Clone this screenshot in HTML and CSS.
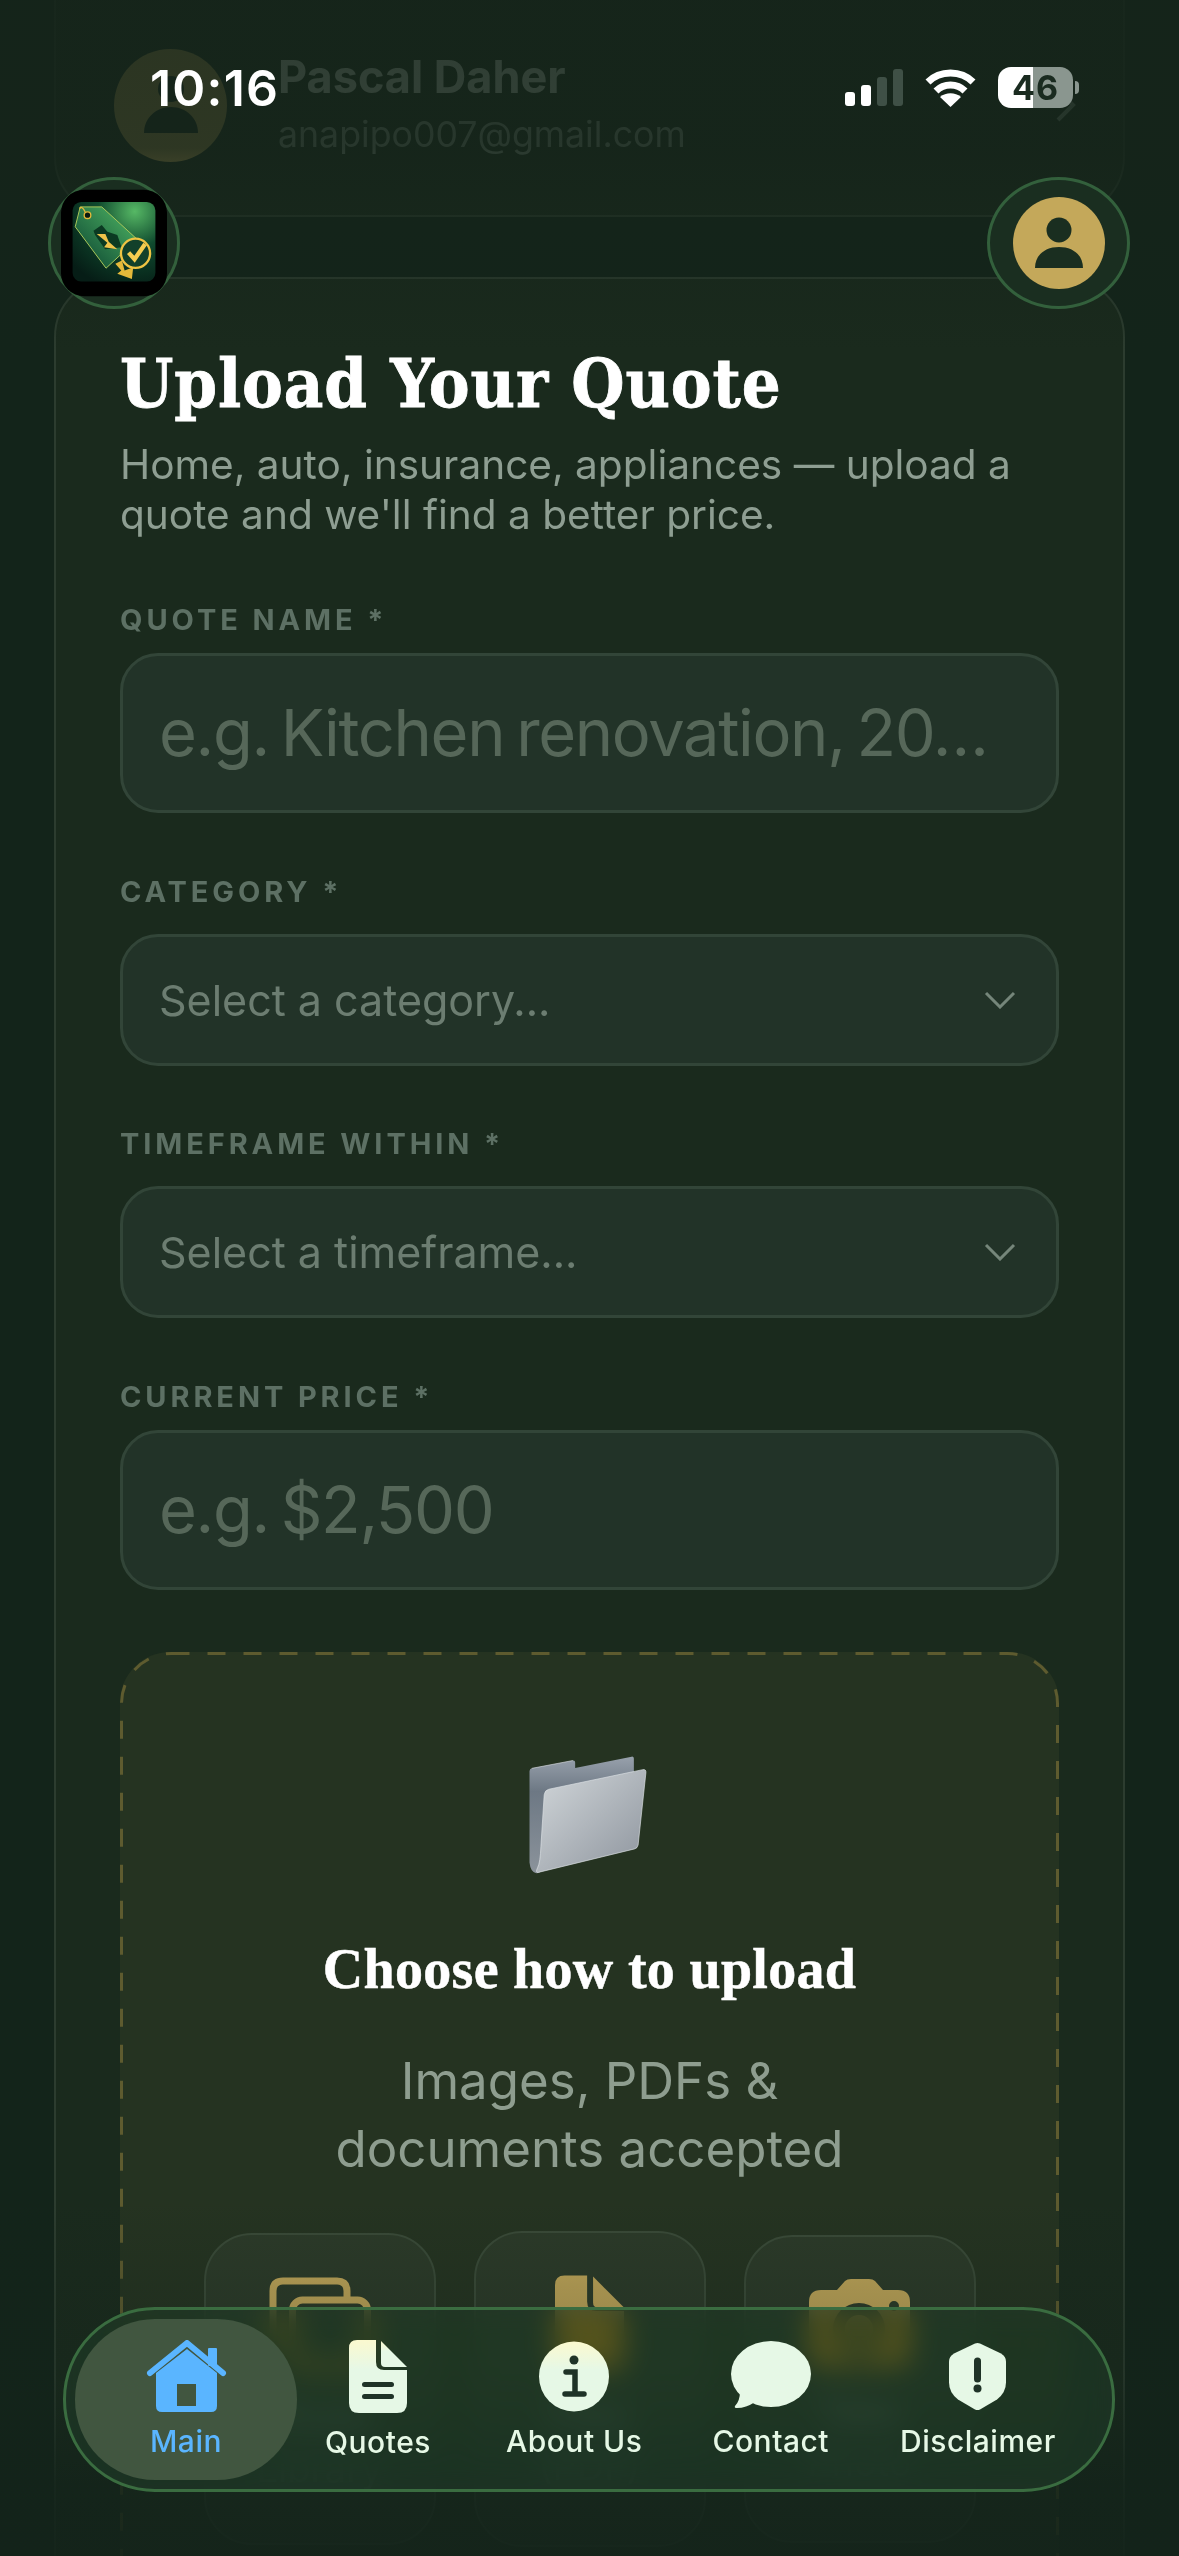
FILE: index.html
```html
<!DOCTYPE html>
<html>
<head>
  <title>Upload Your Quote</title>
  <meta charset="utf-8">
  <meta name="viewport" content="width=device-width, initial-scale=1.0">
  <link rel="stylesheet" href="styles.css">
</head>
<body>

  <div class="profile-card">
    <div class="profile-avatar">
      <svg width="62" height="62" viewBox="0 0 62 62"><circle cx="31" cy="14" r="13" fill="#14241a"/><path d="M4 58C4 43 16 32 31 32s27 11 27 26z" fill="#14241a"/></svg>
    </div>
    <div class="profile-text">
      <div class="profile-name">Pascal Daher</div>
      <div class="profile-email">anapipo007@gmail.com</div>
    </div>
    <svg class="profile-chevron" width="20" height="34" viewBox="0 0 20 34"><path d="M2 2l15 15L2 32" fill="none" stroke="#8fa092" stroke-width="4"/></svg>
  </div>

  <div class="main-card">
    <h1 class="page-title">Upload Your Quote</h1>
    <p class="page-sub">Home, auto, insurance, appliances — upload a quote and we'll find a better price.</p>

    <div class="label">QUOTE NAME *</div>
    <div class="text-box">e.g. Kitchen renovation, 20…</div>

    <div class="label label-select">CATEGORY *</div>
    <div class="select-box">
      <span>Select a category...</span>
      <svg width="32" height="18" viewBox="0 0 32 18"><path d="M2 2l14 14L30 2" fill="none" stroke="#75867a" stroke-width="3"/></svg>
    </div>

    <div class="label label-select">TIMEFRAME WITHIN *</div>
    <div class="select-box">
      <span>Select a timeframe...</span>
      <svg width="32" height="18" viewBox="0 0 32 18"><path d="M2 2l14 14L30 2" fill="none" stroke="#75867a" stroke-width="3"/></svg>
    </div>

    <div class="label">CURRENT PRICE *</div>
    <div class="text-box">e.g. $2,500</div>

    <div class="drop-zone">
      <svg class="drop-dash" width="100%" height="100%"><rect x="1.5" y="1.5" width="936" height="1000" rx="50" fill="none" stroke="#5e5b2f" stroke-width="3" stroke-dasharray="18 18"/></svg>

      <svg class="folder" width="122" height="120" viewBox="236 160 365 368">
        <defs>
          <linearGradient id="folderBack" x1="0" y1="0" x2="0" y2="1"><stop offset="0" stop-color="#98a1ac"/><stop offset="0.3" stop-color="#6d7884"/><stop offset="1" stop-color="#8b939b"/></linearGradient>
          <linearGradient id="folderFront" x1="0" y1="0" x2="1" y2="1"><stop offset="0" stop-color="#d2d7da"/><stop offset="1" stop-color="#8d949d"/></linearGradient>
        </defs>
        <path d="M233 210Q233 203 240 201L366 177Q373 176 373 183V200L546 165Q553 164 553 171V240L280 500Q270 525 252 522Q236 518 233 490Z" fill="url(#folderBack)"/>
        <path d="M240 201L366 177" fill="none" stroke="#d5d9dd" stroke-width="2"/>
        <path d="M292 265L580 205Q591 203 590 214L566 436Q564 446 555 448L260 520Q250 522 258 505Q266 490 268 440L278 282Q280 268 292 265Z" fill="url(#folderFront)" stroke="#dfe3e6" stroke-width="2"/>
      </svg>

      <h2 class="drop-title">Choose how to upload</h2>
      <p class="drop-sub">Images, PDFs &amp;<br>documents accepted</p>

      <div class="upload-row">
        <div class="upload-btn upload-btn-a">
          <svg class="upload-icon" width="102" height="96" viewBox="0 0 102 96" fill="none" stroke="#c4a85a" stroke-width="7"><path d="M4 70V14Q4 4 14 4H68Q78 4 78 14V23"/><rect x="23.500" y="23" width="75" height="66" rx="10" fill="#2b3928"/></svg>
          <div class="upload-text">Photo<br>Library</div>
        </div>
        <div class="upload-btn upload-btn-b">
          <svg class="upload-icon upload-icon-doc" width="69" height="96" viewBox="0 0 58 80" fill="#c4a85a"><path d="M8 0H27V22Q27 30 35 30H58V70Q58 80 48 80H10Q0 80 0 70V8Q0 0 8 0Z"/><path d="M32 1L58 27H36Q32 27 32 23Z"/></svg>
          <div class="upload-text">Files<br>(PDF)</div>
        </div>
        <div class="upload-btn upload-btn-c">
          <svg class="upload-icon" width="101" height="88" viewBox="0 0 101 88"><path fill-rule="evenodd" fill="#c4a85a" d="M12 11H28L36 2Q38 0 42 0H60Q64 0 66 2L74 11H89Q101 11 101 23V76Q101 88 89 88H12Q0 88 0 76V23Q0 11 12 11ZM50 24A26 26 0 1 0 50 76A26 26 0 1 0 50 24ZM50 36A14 14 0 1 1 50 64A14 14 0 1 1 50 36ZM85 22A5 5 0 1 0 85 32A5 5 0 1 0 85 22Z"/></svg>
          <div class="upload-text">Take<br>Photo</div>
        </div>
      </div>
    </div>
  </div>

  <div class="fade-top"></div>
  <div class="fade-bottom"></div>

  <div class="status-bar">
    <div class="status-time">10:16</div>
    <div class="status-icons">
      <div class="signal">
        <span class="bar bar-1"></span>
        <span class="bar bar-2"></span>
        <span class="bar bar-3"></span>
        <span class="bar bar-4"></span>
      </div>
      <svg width="51" height="38" viewBox="0 0 51 38">
        <path d="M3 13C15 1 36 1 48 13" fill="none" stroke="#fff" stroke-width="7"/>
        <path d="M11 22C19 14 32 14 40 22" fill="none" stroke="#fff" stroke-width="7"/>
        <path d="M25.500 38L15 28C21 23 30 23 36 28Z" fill="#fff"/>
      </svg>
      <div class="battery">46</div>
      <div class="battery-tip"></div>
    </div>
  </div>

  <div class="logo-ring">
    <svg width="106" height="108" viewBox="92 88 320 322">
      <defs>
        <radialGradient id="tile" cx="0.75" cy="0.12" r="1"><stop offset="0" stop-color="#56b865"/><stop offset="0.45" stop-color="#0f4a2e"/><stop offset="1" stop-color="#061d16"/></radialGradient>
        <linearGradient id="tag" x1="1" y1="0" x2="0" y2="1"><stop offset="0" stop-color="#52bb66"/><stop offset="0.8" stop-color="#17583a"/><stop offset="1" stop-color="#0f4029"/></linearGradient>
      </defs>
      <rect x="92" y="88" width="320" height="322" rx="70" fill="#000"/>
      <rect x="127" y="125" width="250" height="240" rx="26" fill="url(#tile)"/>
      <path d="M150 140H215L322 238L228 325L135 200Z" fill="url(#tag)" stroke="#a9c85a" stroke-width="3"/>
      <circle cx="172" cy="165" r="10" fill="#0a1a10" stroke="#e5b93a" stroke-width="4"/>
      <path d="M148 145Q155 135 165 155" fill="none" stroke="#e5b93a" stroke-width="4"/>
      <path d="M190 212L215 195L232 215L262 225L275 262L225 268L195 225Z" fill="#0b3a22"/>
      <path d="M200 222L226 222L236 245L262 268L222 262L232 248Z" fill="#eec34a"/>
      <path d="M256 312L276 302L284 332L310 322L306 358L262 342L274 332Z" fill="#e5b93a"/>
      <circle cx="317" cy="280" r="44" fill="#12402a" stroke="#efc343" stroke-width="7"/>
      <path d="M296 278L314 298L346 252" fill="none" stroke="#f5cc50" stroke-width="13"/>
    </svg>
  </div>

  <div class="user-ring">
    <div class="user-dot">
      <svg width="48" height="52" viewBox="0 0 48 52"><circle cx="24" cy="13" r="12.500" fill="#1a2e20"/><path d="M0 51C0 38 10 30 24 30s24 8 24 21z" fill="#1a2e20"/></svg>
    </div>
  </div>

  <div class="bottom-nav">
    <div class="nav-item nav-active">
      <svg width="81" height="72" viewBox="0 0 81 72">
        <path d="M4 33L41 3L77 33" fill="none" stroke="#5ab5ff" stroke-width="6" stroke-linecap="round" stroke-linejoin="round"/>
        <rect x="62" y="8" width="9" height="18" rx="1" fill="#5ab5ff"/>
        <path fill-rule="evenodd" fill="#5ab5ff" d="M10 33L41 9L71 33V66Q71 72 65 72H16Q10 72 10 66ZM31 44V66H50V44Z"/>
      </svg>
      <span>Main</span>
    </div>
    <div class="nav-item">
      <svg width="58" height="73" viewBox="0 0 58 73">
        <defs><linearGradient id="glowFill" x1="0" y1="0" x2="0" y2="1"><stop offset="0" stop-color="#fbf9cf"/><stop offset="0.4" stop-color="#e6f8e6"/></linearGradient></defs>
        <path d="M8 0H27V22Q27 30 35 30H58V63Q58 73 48 73H10Q0 73 0 63V8Q0 0 8 0Z" fill="url(#glowFill)"/>
        <path d="M32 1L58 27H36Q32 27 32 23Z" fill="url(#glowFill)"/>
        <rect x="13" y="42" width="32" height="5" rx="2.500" fill="#1f3327"/>
        <rect x="13" y="54" width="32" height="5" rx="2.500" fill="#1f3327"/>
      </svg>
      <span>Quotes</span>
    </div>
    <div class="nav-item nav-about">
      <svg width="70" height="71" viewBox="0 0 70 71">
        <circle cx="35" cy="35.500" r="35" fill="url(#glowFill)"/>
        <circle cx="35" cy="19" r="4.500" fill="#1f3327"/>
        <path d="M27 31H36V52M26 53H45" fill="none" stroke="#1f3327" stroke-width="5.500" stroke-linecap="round"/>
      </svg>
      <span>About Us</span>
    </div>
    <div class="nav-item">
      <svg width="80" height="71" viewBox="0 0 80 71">
        <ellipse cx="40" cy="33" rx="40" ry="33" fill="#e6f8e6"/>
        <path d="M9 50Q9 60 4 65Q3 67 6 67Q15 67 24 61Z" fill="#e6f8e6"/>
      </svg>
      <span>Contact</span>
    </div>
    <div class="nav-item">
      <svg width="57" height="71" viewBox="0 0 57 68">
        <path d="M26 1Q28.500 0 31 1L52 11Q57 14 57 19V40Q57 50 48 57L31 67Q28.500 68 26 67L9 57Q0 50 0 40V19Q0 14 5 11Z" fill="#e6f8e6"/>
        <rect x="25" y="15" width="7" height="25" rx="3.500" fill="#1f3327"/>
        <circle cx="28.500" cy="46" r="4" fill="#1f3327"/>
      </svg>
      <span>Disclaimer</span>
    </div>
  </div>

</body>
</html>
```

FILE: styles.css
```css
html, body {
  margin: 0;
  height: 2556px;
  overflow: hidden;
}

body {
  position: relative;
  background-color: #13241a;
  font-family: 'Inter', 'Liberation Sans', sans-serif;
}

/* cards */

.profile-card {
  display: flex;
  align-items: flex-start;
  box-sizing: border-box;
  height: 277px;
  margin: -60px 54px 60px;
  padding: 107px 0 0 58px;
  background-color: #1a2a1d;
  border: 2px solid #2a3a2d;
  border-radius: 60px;
}

.profile-avatar {
  display: flex;
  align-items: center;
  justify-content: center;
  flex: none;
  width: 113px;
  height: 113px;
  border-radius: 50%;
  background-color: #c4a85a;
}

.profile-text {
  margin-left: 51px;
}

.profile-name {
  font-size: 45px;
  font-weight: 700;
  line-height: 56px;
  color: #e6f0e6;
}

.profile-email {
  margin-top: 2px;
  font-size: 35.7px;
  line-height: 54px;
  color: #9aa99d;
}

.profile-chevron {
  margin: 39px 47px 0 auto;
}

.main-card {
  box-sizing: border-box;
  height: 2400px;
  margin: 0 54px;
  padding: 0 64px;
  background-color: #1a2a1d;
  border: 2px solid #2c3c2f;
  border-radius: 60px;
}

.page-title {
  margin: 60px 0 0;
  font-family: 'DejaVu Serif Condensed', 'DejaVu Serif', serif;
  font-size: 68px;
  font-stretch: condensed;
  font-weight: 700;
  line-height: 88px;
  letter-spacing: 0.9px;
  color: #fff;
  -webkit-text-stroke: 0.8px #fff;
}

.page-sub {
  margin: 13px 0 0;
  font-size: 40.6px;
  line-height: 50px;
  color: #8e9e92;
}

/* form */

.label {
  margin-top: 60.6px;
  margin-bottom: 15px;
  font-size: 29px;
  font-weight: 700;
  line-height: 36px;
  letter-spacing: 3.9px;
  color: #5d7064;
}

.page-sub + .label {
  margin-top: 62px;
}

.label-select {
  margin-bottom: 24px;
}

.text-box {
  box-sizing: border-box;
  height: 160px;
  padding: 0 36px;
  background-color: #223328;
  border: 3px solid #324538;
  border-radius: 38px;
  font-size: 65px;
  line-height: 154px;
  letter-spacing: -1.35px;
  word-spacing: -5px;
  white-space: nowrap;
  color: #566759;
}

.select-box {
  display: flex;
  align-items: center;
  justify-content: space-between;
  box-sizing: border-box;
  height: 132px;
  padding: 0 40px 0 36px;
  background-color: #223328;
  border: 3px solid #324538;
  border-radius: 38px;
  font-size: 43px;
  color: #6c7d71;
}

/* upload box */

.drop-zone {
  position: relative;
  box-sizing: border-box;
  height: 1004px;
  margin-top: 62px;
  padding-top: 103px;
  background-color: #253321;
  border-radius: 50px;
  text-align: center;
}

.drop-dash {
  position: absolute;
  left: 0;
  top: 0;
}

.folder {
  display: block;
  margin: 0 auto;
}

.drop-title {
  margin: 62px 0 0;
  font-family: 'Liberation Serif', serif;
  font-size: 56px;
  font-weight: 700;
  line-height: 64px;
  letter-spacing: 0.3px;
  color: #fff;
  -webkit-text-stroke: 0.5px #fff;
}

.drop-sub {
  margin: 46px 0 0;
  font-size: 51px;
  line-height: 68px;
  color: #8e9d8f;
}

.upload-row {
  display: flex;
  align-items: center;
  justify-content: center;
  gap: 38px;
  height: 316px;
  margin-top: 48px;
}

.upload-btn {
  box-sizing: border-box;
  width: 232px;
  padding-top: 42px;
  background-color: #2c3a29;
  border: 2px solid #3a4a38;
  border-radius: 48px;
}

.upload-btn-a {
  height: 312px;
}

.upload-btn-b {
  height: 316px;
}

.upload-btn-c {
  height: 308px;
}

.upload-icon {
  display: block;
  margin: 0 auto;
}

.upload-text {
  margin-top: 20px;
  font-size: 38px;
  line-height: 50px;
  color: #9aa99d;
}

/* the page fades out under the status bar and under the nav */

.fade-top {
  position: absolute;
  left: 0;
  top: 0;
  width: 100%;
  height: 400px;
  background: linear-gradient(to bottom, rgba(21, 36, 26, 0.88) 0, rgba(21, 36, 26, 0.86) 37%, rgba(21, 36, 26, 0.4) 62%, rgba(21, 36, 26, 0) 88%);
}

.fade-bottom {
  position: absolute;
  left: 0;
  bottom: 0;
  width: 100%;
  height: 356px;
  background: linear-gradient(to bottom, rgba(19, 35, 26, 0) 0, rgba(19, 35, 26, 0.18) 25%, rgba(19, 35, 26, 0.3) 50%, rgba(19, 35, 26, 0.85) 80%, rgba(19, 35, 26, 0.92) 100%);
}

/* status bar */

.status-bar {
  position: absolute;
  left: 0;
  top: 0;
  display: flex;
  align-items: flex-start;
  justify-content: space-between;
  box-sizing: border-box;
  width: 100%;
  padding: 58px 100px 0 150px;
}

.status-time {
  font-size: 50px;
  font-weight: 600;
  line-height: 60px;
  letter-spacing: 1.2px;
  color: #fff;
}

.status-icons {
  display: flex;
  align-items: center;
  gap: 22px;
  margin-top: 9px;
}

.signal {
  display: flex;
  align-items: flex-end;
  gap: 6px;
  height: 37px;
}

.bar {
  width: 10px;
  border-radius: 3px;
  background-color: #fff;
}

.bar-1 {
  height: 14px;
}

.bar-2 {
  height: 21px;
}

.bar-3 {
  height: 29px;
  background-color: #3f5046;
}

.bar-4 {
  height: 37px;
  background-color: #3f5046;
}

.battery {
  width: 75px;
  height: 41px;
  border-radius: 13px;
  background: linear-gradient(to right, #fff 47%, #8a968f 47%);
  font-size: 34px;
  font-weight: 700;
  line-height: 41px;
  letter-spacing: 1px;
  text-align: center;
  color: #1a2b20;
}

.battery-tip {
  width: 4px;
  height: 13px;
  margin-left: -20px;
  border-radius: 0 6px 6px 0;
  background-color: #8a968f;
}

/* round buttons over the header */

.logo-ring {
  position: absolute;
  left: 48px;
  top: 177px;
  display: flex;
  align-items: center;
  justify-content: center;
  box-sizing: border-box;
  width: 132px;
  height: 132px;
  border: 3px solid #33603c;
  border-radius: 50%;
  background-color: #1a2e20;
}

.user-ring {
  position: absolute;
  left: 987px;
  top: 177px;
  display: flex;
  align-items: center;
  justify-content: center;
  box-sizing: border-box;
  width: 143px;
  height: 132px;
  border: 3px solid #33603c;
  border-radius: 50%;
  background-color: #1a2e20;
}

.user-dot {
  display: flex;
  align-items: center;
  justify-content: center;
  width: 92px;
  height: 92px;
  border-radius: 50%;
  background-color: #c4a85a;
}

/* bottom nav */

.bottom-nav {
  position: absolute;
  left: 63px;
  top: 2307px;
  display: flex;
  align-items: center;
  gap: 71px;
  box-sizing: border-box;
  width: 1052px;
  height: 185px;
  padding-left: 9px;
  background: rgba(36, 54, 42, 0.66);
  border: 3px solid #3a6c40;
  border-radius: 92px;
  -webkit-backdrop-filter: blur(14px) saturate(2.2);
  backdrop-filter: blur(14px) saturate(2.2);
}

.nav-item {
  display: flex;
  flex-direction: column;
  align-items: center;
  flex: none;
  gap: 11px;
  font-size: 30px;
  font-weight: 500;
  line-height: 36px;
  letter-spacing: 0.5px;
  color: #e6f8e6;
}

.nav-item svg {
  display: block;
}

.nav-about {
  margin: 0 -1px 0 4px;
}

.nav-active {
  justify-content: center;
  box-sizing: border-box;
  width: 222px;
  height: 161px;
  margin-right: -43px;
  border-radius: 80px;
  background-color: #415640;
  color: #5ab5ff;
}
```
